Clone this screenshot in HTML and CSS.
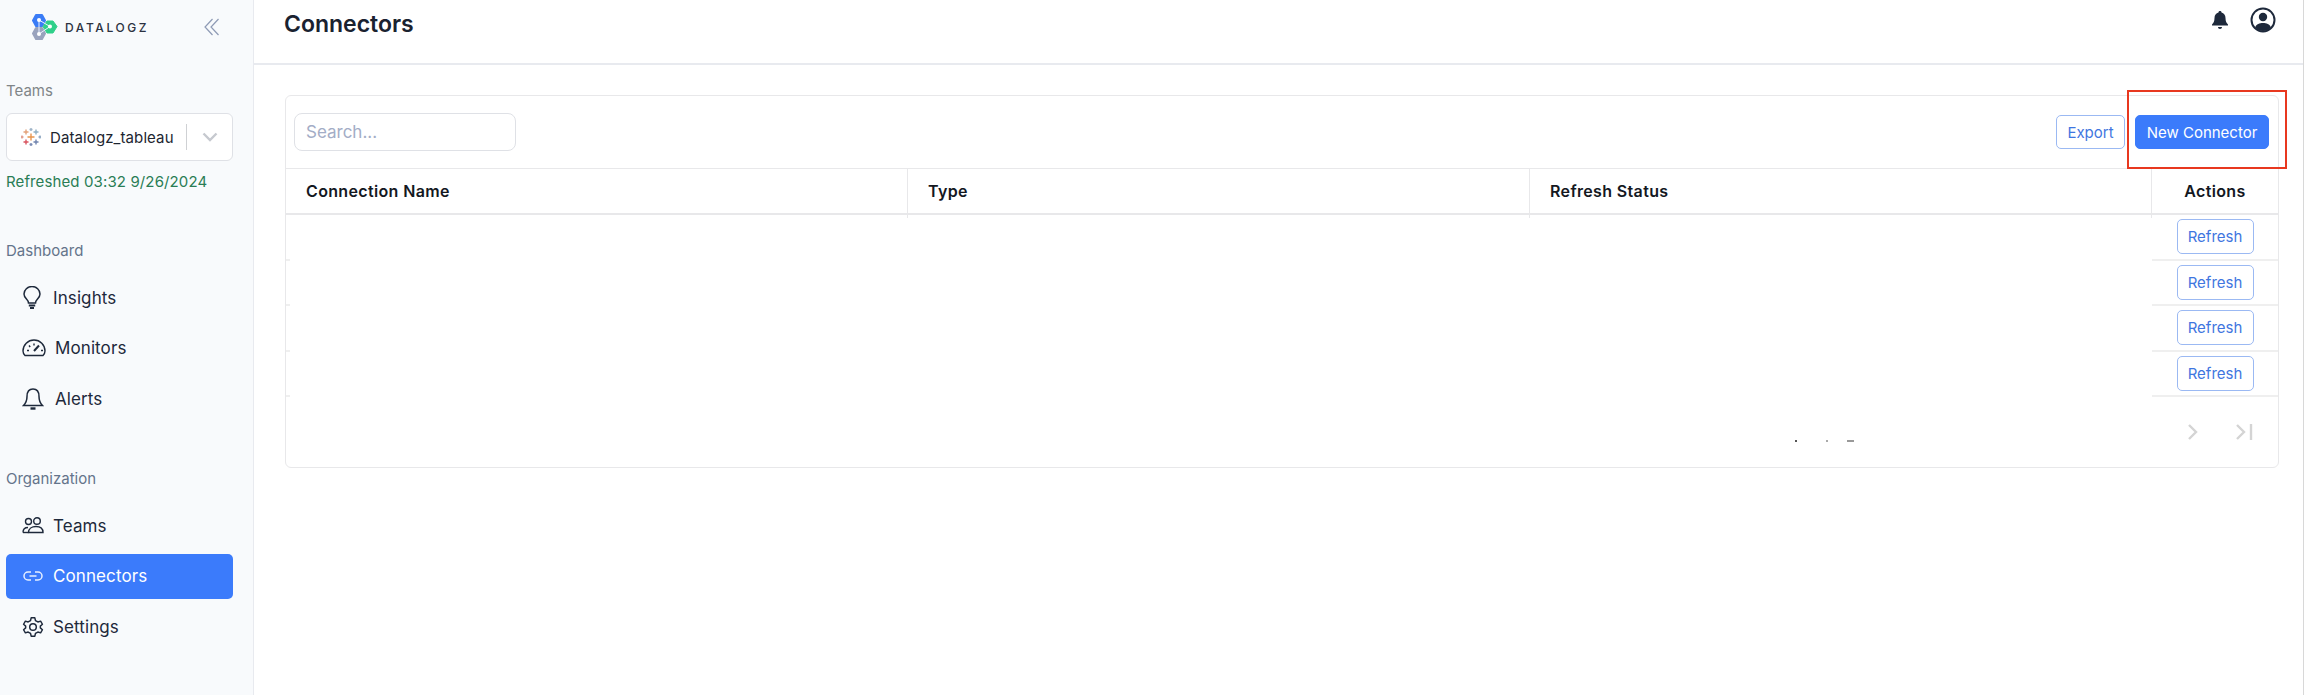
FILE: index.html
```html
<!DOCTYPE html>
<html lang="en">
<head>
    <meta charset="UTF-8">
    <title>Connectors</title>
    <link rel="stylesheet" href="styles.css">
</head>
<body>
    <aside class="sidebar">
        <div class="brand">
            <svg class="brand-mark" width="26" height="28" viewBox="0 0 26 28">
                <polygon points="4,2 10,2 13,7.500 10,13 4,13 1,7.500" fill="#3b7cf6" stroke="#3b7cf6" stroke-width="2" stroke-linejoin="round"/>
                <polygon points="4,15 10,15 13,20.500 10,26 4,26 1,20.500" fill="#9aa3bd" stroke="#9aa3bd" stroke-width="2" stroke-linejoin="round"/>
                <polygon points="15,8 21,8 25,13.500 21,20 15,20 11,13.500" fill="#2fd08a" stroke="#2fd08a" stroke-linejoin="round"/>
                <path d="M7 7 L7 21 M7 7 L18 13.500 L7 21" fill="none" stroke="#e8f0ff" stroke-width="1"/>
                <circle cx="7" cy="7" r="2" fill="#fff"/>
                <circle cx="18" cy="13.500" r="2" fill="#fff"/>
                <circle cx="7" cy="21" r="2" fill="#fff"/>
            </svg>
            <span class="brand-name">DATALOGZ</span>
            <svg class="collapse" width="16" height="18" viewBox="0 0 16 18" fill="none" stroke="#8e9ab5" stroke-width="1.200">
                <path d="M8.500 1 L1 9 L8.500 17"/>
                <path d="M14.500 1 L7 9 L14.500 17"/>
            </svg>
        </div>

        <div class="side-label teams-label">Teams</div>
        <div class="team-select">
            <svg class="tableau" width="20" height="20" viewBox="0 0 20 20" stroke-width="1.400">
                <path d="M10 6.500v7M6.500 10h7" stroke="#e8954d"/>
                <path d="M5 2.500v5M2.500 5h5" stroke="#e3a27a"/>
                <path d="M15 2.500v5M12.500 5h5" stroke="#8fb0c4"/>
                <path d="M5 12.500v5M2.500 15h5" stroke="#d9545f"/>
                <path d="M15 12.500v5M12.500 15h5" stroke="#6f83ad"/>
                <path d="M10 1v3M8.500 2.500h3" stroke="#9fb4c8"/>
                <path d="M10 16v3M8.500 17.500h3" stroke="#7c8db5"/>
                <path d="M1 8.500v3M0 10h2.500" stroke="#e09a8c"/>
                <path d="M19 8.500v3M17.500 10h2.500" stroke="#90a8c2"/>
            </svg>
            <span class="team-name">Datalogz_tableau</span>
            <span class="select-sep"></span>
            <svg class="select-arrow" width="16" height="10" viewBox="0 0 16 10" fill="none" stroke="#c6c9cf" stroke-width="2.400">
                <path d="M1.500 1.500 L8 8 L14.500 1.500"/>
            </svg>
        </div>
        <div class="refreshed">Refreshed 03:32 9/26/2024</div>

        <div class="side-label dash-label">Dashboard</div>
        <nav class="nav">
            <a class="nav-item nav-narrow">
                <svg width="20" height="24" viewBox="0 0 20 24" fill="none" stroke="#1e293b" stroke-width="1.500">
                    <path d="M6.500 17 C6.500 13.500 2 12.500 2 8 A8 7.500 0 0 1 18 8 C18 12.500 13.500 13.500 13.500 17 Z"/>
                    <path d="M6.800 19.500 H13.200 M8 22 H12" stroke-width="2.200"/>
                </svg>
                <span>Insights</span>
            </a>
            <a class="nav-item">
                <svg width="24" height="18" viewBox="0 0 24 18" fill="none" stroke="#1e293b" stroke-width="1.400">
                    <path d="M3 16.500 C1.500 15 1 13.500 1 12 A11 11 0 0 1 23 12 C23 13.500 22.500 15 21 16.500 Z"/>
                    <path d="M12 12 L17 6.500" stroke-width="2"/>
                    <path d="M5 11.500 H7 M7 6.500 L8.200 8 M12 4.500 V6.500 M19 11.500 H21"/>
                </svg>
                <span>Monitors</span>
            </a>
            <a class="nav-item nav-narrow">
                <svg width="22" height="24" viewBox="0 0 22 24" fill="none" stroke="#1e293b" stroke-width="1.500">
                    <path d="M11 2 C6.500 2 5 6 5 9.500 C5 14 3.500 16.500 1.500 18.500 H20.500 C18.500 16.500 17 14 17 9.500 C17 6 15.500 2 11 2 Z"/>
                    <path d="M8.500 21.500 H13.500" stroke-width="2.400"/>
                </svg>
                <span>Alerts</span>
            </a>
        </nav>

        <div class="side-label org-label">Organization</div>
        <nav class="nav">
            <a class="nav-item">
                <svg width="22" height="17" viewBox="0 0 22 17" fill="none" stroke="#1e293b" stroke-width="1.400">
                    <circle cx="6.500" cy="4.500" r="3"/>
                    <circle cx="15" cy="4" r="3.300"/>
                    <path d="M1 15.500 C1 12 3 10.500 6 10.500 M6.500 15.500 C6.500 11.500 10 9.500 14 9.500 C18 9.500 21 11.500 21 15.500 Z"/>
                    <path d="M1 15.500 H6.500"/>
                </svg>
                <span>Teams</span>
            </a>
            <a class="nav-item active">
                <svg width="20" height="10" viewBox="0 0 20 10" fill="none" stroke="#e6efff" stroke-width="1.500">
                    <path d="M8 1 H5 A4 4 0 0 0 5 9 H8"/>
                    <path d="M12 1 H15 A4 4 0 0 1 15 9 H12"/>
                    <path d="M6.500 5 H13.500"/>
                </svg>
                <span>Connectors</span>
            </a>
            <a class="nav-item">
                <svg width="22" height="22" viewBox="0 0 24 24" fill="none" stroke="#1e293b" stroke-width="1.600">
                    <path d="M10 2 H14 L14.700 5 L17.300 6.500 L20.300 5.600 L22.300 9 L20 11 V13 L22.300 15 L20.300 18.400 L17.300 17.500 L14.700 19 L14 22 H10 L9.300 19 L6.700 17.500 L3.700 18.400 L1.700 15 L4 13 V11 L1.700 9 L3.700 5.600 L6.700 6.500 L9.300 5 Z" stroke-linejoin="round"/>
                    <circle cx="12" cy="12" r="3.600"/>
                </svg>
                <span>Settings</span>
            </a>
        </nav>
    </aside>

    <div class="main">
        <header class="topbar">
            <h1>Connectors</h1>
            <div class="top-icons">
                <svg width="18" height="20" viewBox="0 0 18 20" fill="#1e293b">
                    <path d="M9 1 C10 1 10.500 1.600 10.500 2.400 C13 3 14.500 5 14.500 8 C14.500 11.500 15.500 13 17 14.500 V15.500 H1 V14.500 C2.500 13 3.500 11.500 3.500 8 C3.500 5 5 3 7.500 2.400 C7.500 1.600 8 1 9 1 Z"/>
                    <path d="M7 17 H11 C11 18.200 10.200 19 9 19 C7.800 19 7 18.200 7 17 Z"/>
                </svg>
                <svg width="26" height="26" viewBox="0 0 26 26">
                    <circle cx="13" cy="13" r="11.500" fill="#fff" stroke="#1e293b" stroke-width="2"/>
                    <circle cx="13" cy="10" r="4.200" fill="#1e293b"/>
                    <path d="M5 20.500 C6.500 17 9.500 16 13 16 C16.500 16 19.500 17 21 20.500 C19 23 16 24 13 24 C10 24 7 23 5 20.500 Z" fill="#1e293b"/>
                </svg>
            </div>
        </header>

        <section class="card">
            <div class="toolbar">
                <input class="search" type="text" placeholder="Search...">
                <div class="toolbar-actions">
                    <button class="btn btn-outline export-btn">Export</button>
                    <button class="btn btn-primary new-btn">New Connector</button>
                    <span class="callout"></span>
                </div>
            </div>

            <div class="table">
                <div class="table-head">
                    <div class="cell">Connection Name</div>
                    <div class="cell">Type</div>
                    <div class="cell">Refresh Status</div>
                    <div class="cell cell-actions">Actions</div>
                </div>
                <div class="table-row"><div class="row-blank"></div><div class="cell-actions"><button class="btn btn-outline">Refresh</button></div></div>
                <div class="table-row"><div class="row-blank"></div><div class="cell-actions"><button class="btn btn-outline">Refresh</button></div></div>
                <div class="table-row"><div class="row-blank"></div><div class="cell-actions"><button class="btn btn-outline">Refresh</button></div></div>
                <div class="table-row"><div class="row-blank"></div><div class="cell-actions"><button class="btn btn-outline">Refresh</button></div></div>
            </div>

            <div class="pager">
                <div class="pager-marks">
                    <span class="mark"></span>
                    <span class="mark mark-faint"></span>
                    <span class="mark mark-wide"></span>
                </div>
                <svg width="14" height="18" viewBox="0 0 14 18" fill="none" stroke="#d4d4d4" stroke-width="2.400">
                    <path d="M3 2 L10 9 L3 16"/>
                </svg>
                <svg width="18" height="18" viewBox="0 0 18 18" fill="none" stroke="#d4d4d4" stroke-width="2.400">
                    <path d="M1 2 L8 9 L1 16"/>
                    <path d="M15 1 V17"/>
                </svg>
            </div>
        </section>
    </div>
</body>
</html>
```

FILE: styles.css
```css
* {
    box-sizing: border-box;
}
html, body {
    margin: 0;
    height: 100%;
}
body {
    display: flex;
    height: 695px;
    overflow: hidden;
    font-family: 'Inter', sans-serif;
    color: #1e293b;
    background: #fff;
    border-right: 1px solid #d8d8d8;
}

/* sidebar */
.sidebar {
    width: 254px;
    flex-shrink: 0;
    background: #f8fafc;
    border-right: 1px solid #e8eaef;
    padding: 13px 20px 0 6px;
}
.brand {
    display: flex;
    align-items: center;
    height: 28px;
    padding-left: 26px;
}
.brand-name {
    margin-left: 7px;
    font-size: 12px;
    font-weight: 500;
    letter-spacing: 2.6px;
    color: #2b3140;
}
.collapse {
    margin-left: auto;
    margin-right: 13px;
}
.side-label {
    font-size: 15px;
    line-height: 18px;
    color: #64748b;
}
.teams-label {
    margin-top: 41px;
    color: #808588;
}
.team-select {
    display: flex;
    align-items: center;
    height: 48px;
    margin-top: 13px;
    padding-left: 14px;
    background: #fff;
    border: 1px solid #dfe1e6;
    border-radius: 6px;
}
.team-name {
    margin-left: 9px;
    font-size: 15px;
    letter-spacing: 0.1px;
    color: #1d2530;
}
.select-sep {
    width: 1px;
    height: 26px;
    margin-left: 12px;
    background: #cfd1d4;
}
.select-arrow {
    margin-left: 15px;
}
.refreshed {
    margin-top: 12px;
    font-size: 15px;
    letter-spacing: 0.12px;
    line-height: 18px;
    color: #2a7d55;
}
.dash-label {
    margin-top: 51px;
}
.org-label {
    margin-top: 49px;
}
.nav {
    display: flex;
    flex-direction: column;
    gap: 5.500px;
    margin-top: 15px;
}
.nav-item {
    display: flex;
    align-items: center;
    gap: 9px;
    height: 45px;
    padding-left: 16px;
    border-radius: 5px;
    font-size: 17px;
    letter-spacing: 0.1px;
    color: #1e293b;
}
.nav-item svg {
    flex-shrink: 0;
}
.nav-narrow {
    gap: 11px;
}
.active {
    background: #3b7bfb;
    color: #fff;
    gap: 10px;
    padding-left: 17px;
}

/* main area */
.main {
    flex: 1;
    min-width: 0;
}
.topbar {
    display: flex;
    align-items: flex-start;
    justify-content: space-between;
    height: 65px;
    padding: 8px 27px 0 30px;
    border-bottom: 2px solid #e8eaef;
}
.topbar h1 {
    margin: 0;
    font-size: 23px;
    line-height: 32px;
    font-weight: 600;
    color: #1a2230;
}
.top-icons {
    display: flex;
    align-items: center;
    gap: 21px;
    margin-top: -1px;
}
.card {
    margin: 30px 24px 0 31px;
    height: 373px;
    border: 1px solid #e8e8ea;
    border-radius: 6px;
}
.toolbar {
    display: flex;
    align-items: center;
    justify-content: space-between;
    height: 72px;
    padding: 0 9px 0 8px;
}
.search {
    width: 222px;
    height: 38px;
    padding: 0 11px;
    border: 1px solid #dfe1e6;
    border-radius: 8px;
    font-family: inherit;
    font-size: 17px;
    outline: none;
}
.search::placeholder {
    color: #a3adc6;
}
.toolbar-actions {
    position: relative;
    display: flex;
    gap: 10px;
}
.btn {
    height: 35px;
    border-radius: 5px;
    font-family: inherit;
    font-size: 15px;
    padding: 0;
}
.btn-outline {
    width: 77px;
    background: #fff;
    border: 1px solid #9bb9f3;
    color: #3f76e0;
}
.export-btn {
    width: 69px;
    height: 34px;
}
.btn-primary {
    background: #3b7bfb;
    border: 1px solid #3b7bfb;
    color: #fff;
}
.new-btn {
    width: 134px;
    height: 34px;
}
/* red box drawn over the screenshot */
.callout {
    position: absolute;
    left: 71px;
    top: -25px;
    width: 160px;
    height: 79px;
    border: 2.500px solid #e8381f;
}
.table-head {
    display: flex;
    height: 47px;
    border-top: 1px solid #e8e8ea;
    border-bottom: 2px solid #e8e8ea;
}
.cell {
    display: flex;
    align-items: center;
    flex: 0 0 622px;
    padding-left: 20px;
    font-size: 16px;
    letter-spacing: 0.35px;
    font-weight: 600;
    color: #14181f;
    border-right: 1px solid #e8e8ea;
}
.cell.cell-actions {
    flex: 1;
    justify-content: center;
    padding: 0;
    border-right: none;
}
.table-row {
    display: flex;
    justify-content: space-between;
    height: 45.500px;
}
/* row lines are blanked out in the shot, only the short stub at the left shows */
.row-blank {
    flex: 1;
    background: linear-gradient(#efefef, #efefef) no-repeat left bottom / 4px 2px;
}
.table-row:nth-child(2) .row-blank {
    background:
        linear-gradient(#e8e8ea, #e8e8ea) no-repeat 621px 0 / 1px 3px,
        linear-gradient(#e8e8ea, #e8e8ea) no-repeat 1243px 0 / 1px 3px,
        linear-gradient(#e8e8ea, #e8e8ea) no-repeat 1865px 0 / 1px 3px,
        linear-gradient(#efefef, #efefef) no-repeat left bottom / 4px 2px;
}
.table-row .cell-actions {
    display: flex;
    align-items: center;
    justify-content: center;
    width: 126px;
    border-bottom: 2px solid #efefef;
}
.pager {
    display: flex;
    justify-content: flex-end;
    gap: 36px;
    padding: 26px 24px 0 0;
}
.pager-marks {
    display: flex;
    align-items: flex-start;
    margin-right: 296px;
    padding-top: 17px;
}
.mark {
    width: 2px;
    height: 2px;
    margin-right: 29px;
    background: #555;
}
.mark-faint {
    margin-right: 19px;
    background: #aaa;
}
.mark-wide {
    width: 7px;
    margin-right: 0;
    background: #999;
}
```
